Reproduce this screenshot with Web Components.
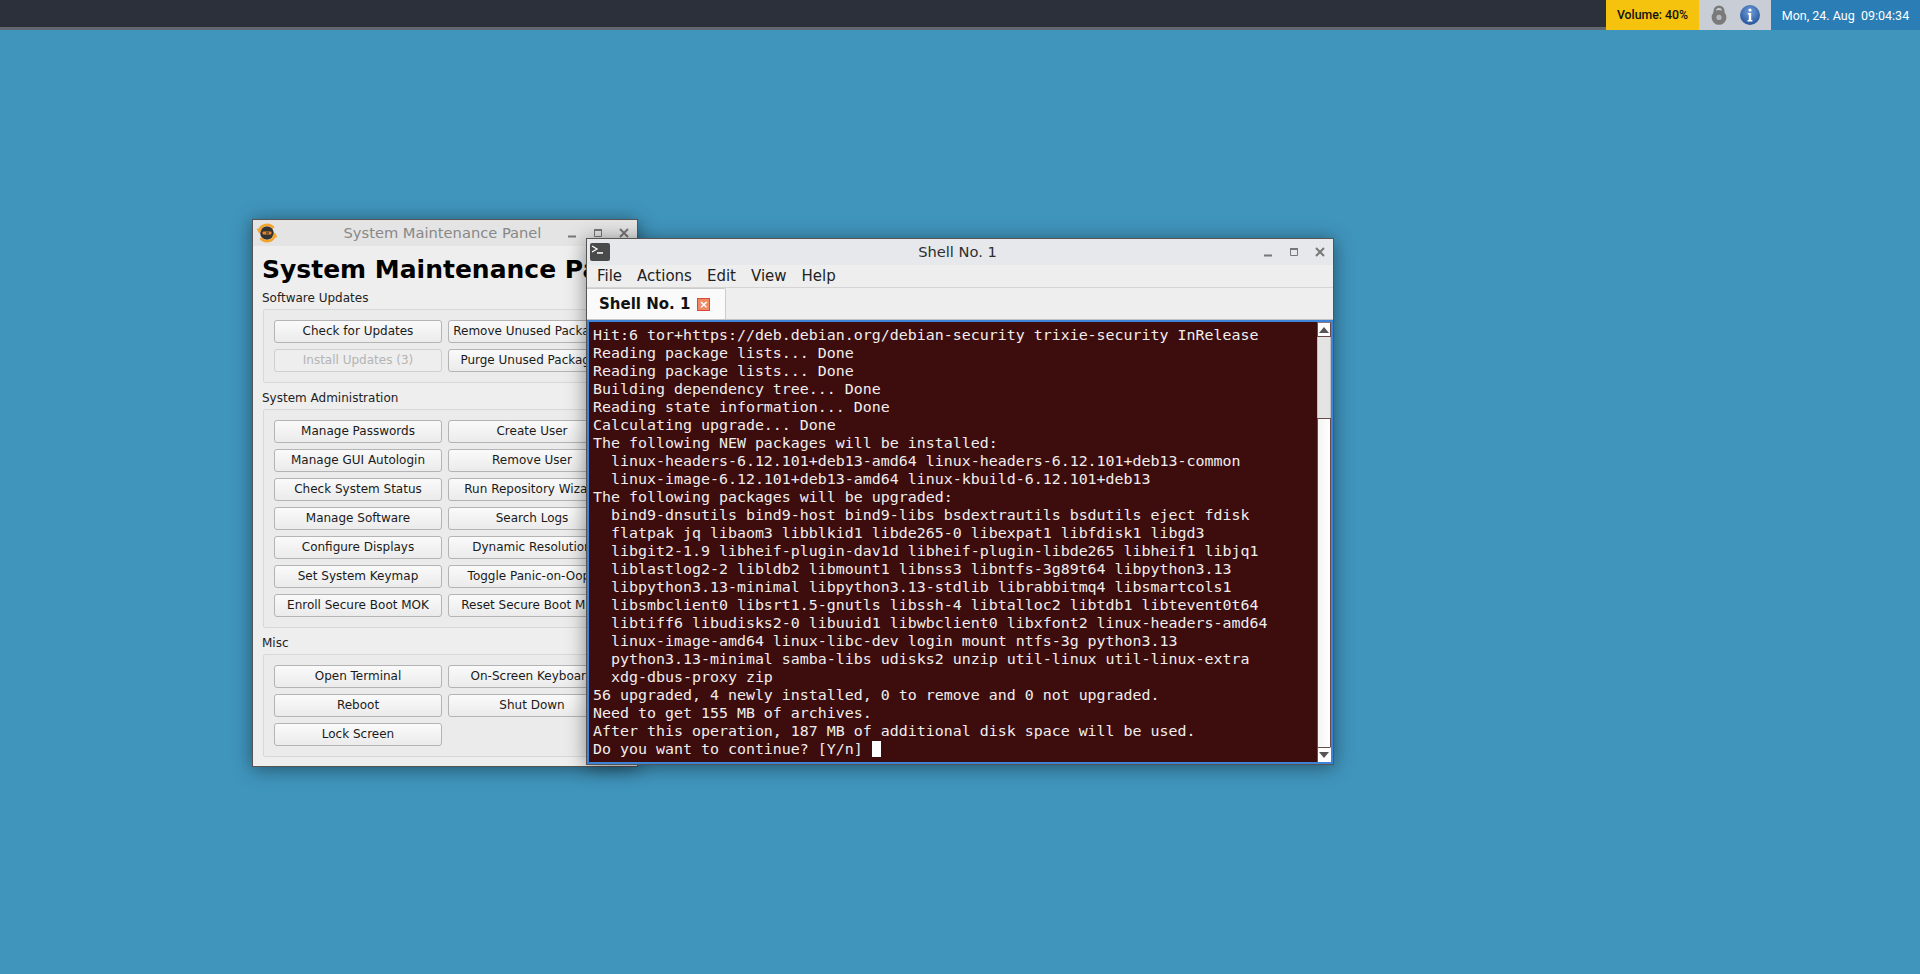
<!DOCTYPE html>
<html>
<head>
<meta charset="utf-8">
<title>Desktop</title>
<style>
  html, body { margin: 0; height: 100%; overflow: hidden; }
  body { background: #4095bd; font-family: "DejaVu Sans", sans-serif; }
  desk-win[data-w="panel"] { left: 252px; top: 219px; width: 386px; height: 548px; }
  desk-win[data-w="shell"] { left: 586px; top: 238px; width: 748px; height: 527px; }
</style>
</head>
<body>
<top-bar></top-bar>

<desk-win data-w="panel" title="System Maintenance Panel" inactive>
  <svg slot="icon" width="22" height="22" viewBox="0 0 22 22">
    <circle cx="11" cy="11" r="6.8" fill="#333"/>
    <path d="M3.2 8.5A8.2 8.2 0 0 1 17.5 6" fill="none" stroke="#f2a42c" stroke-width="2.6"/>
    <path d="M18.8 13.5A8.2 8.2 0 0 1 4.5 16" fill="none" stroke="#f2a42c" stroke-width="2.6"/>
    <path d="M0.5 6.5l5.5 1-3 4z" fill="#f2a42c"/>
    <path d="M21.5 15.5l-5.5-1 3-4z" fill="#f2a42c"/>
    <rect x="6.5" y="9.5" width="9" height="3" rx="1" fill="#e8862a"/>
    <rect x="10" y="10.4" width="3" height="1.2" fill="#333"/>
  </svg>
  <maint-panel></maint-panel>
</desk-win>

<desk-win data-w="shell" title="Shell No. 1">
  <svg slot="icon" width="20" height="18" viewBox="0 0 20 18">
    <rect width="20" height="18" rx="2" fill="#4a4a4a"/>
    <path d="M2 3l5 3-5 3" fill="none" stroke="#fff" stroke-width="1.3"/>
    <rect x="7" y="9.2" width="6" height="1.5" fill="#fff"/>
  </svg>
  <shell-term></shell-term>
</desk-win>

<script>
class TopBar extends HTMLElement {
  constructor() {
    super();
    this.attachShadow({ mode: 'open' });
    this.shadowRoot.innerHTML = `
      <style>
        :host { display: flex; height: 30px; background: #2b303b; font: 12.5px Roboto, sans-serif; box-sizing: border-box; box-shadow: inset 0 -3px 0 #636870; }
        .fill { flex: 1; }
        .vol { width: 93px; background: #f5c20d; color: #111; font-weight: 500; font-size: 12.3px; display: flex; align-items: center; justify-content: center; }
        .tray { width: 72px; box-sizing: border-box; padding-left: 12px; background: #c9ced6; display: flex; align-items: center; gap: 13px; }
        .clock { width: 149px; background: #2a7db5; color: #fff; display: flex; align-items: center; justify-content: center; white-space: pre; }
      </style>
      <div class="fill"></div>
      <div class="vol">Volume: 40%</div>
      <div class="tray">
        <svg width="16" height="20" viewBox="0 0 16 20"><path d="M3.8 9V6a4.2 4.2 0 0 1 8.4 0v3" fill="none" stroke="#7a7a7a" stroke-width="2.6"/><circle cx="8" cy="12.4" r="7.4" fill="#7a7a7a"/><circle cx="8" cy="12.4" r="2.6" fill="#b4b8be"/></svg>
        <svg width="20" height="20" viewBox="0 0 20 20"><defs><radialGradient id="ig" cx="50%" cy="35%" r="70%"><stop offset="0" stop-color="#6f9fd8"/><stop offset="1" stop-color="#1f4f96"/></radialGradient></defs><circle cx="10" cy="10" r="10" fill="url(#ig)"/><circle cx="10" cy="5" r="1.6" fill="#fff"/><path d="M7.8 8h3.4v7h1.2v1.4H7.6V15h1.2V9.4h-1z" fill="#fff"/></svg>
      </div>
      <div class="clock">Mon, 24. Aug  09:04:34</div>`;
  }
}
customElements.define('top-bar', TopBar);

class DeskWin extends HTMLElement {
  constructor() {
    super();
    this.attachShadow({ mode: 'open' });
  }
  connectedCallback() {
    const inactive = this.hasAttribute('inactive');
    this.shadowRoot.innerHTML = `
      <style>
        :host { position: absolute; display: flex; flex-direction: column; box-sizing: border-box; border: 1px solid #555; background: #eeeeee; box-shadow: 0 2px 18px rgba(0,0,0,.45); }
        .bar { height: 26px; flex: none; background: ${inactive ? '#e4e4e4' : '#e6e8ec'}; display: grid; grid-template-columns: 1fr auto 1fr; align-items: center; padding: 0 5px 0 3px; color: ${inactive ? '#888' : '#2e2e2e'}; font: 14.67px "DejaVu Sans", sans-serif; }
        .ico { height: 22px; display: flex; align-items: center; }
        .t { margin: 0 3px 2px 0; }
        .btns { display: flex; gap: 10px; color: #777; justify-content: flex-end; }
        .btns svg { width: 16px; height: 16px; display: block; }
        .body { flex: 1; min-height: 0; display: flex; flex-direction: column; overflow: hidden; }
      </style>
      <div class="bar">
        <div class="ico"><slot name="icon"></slot></div>
        <div class="t">${this.getAttribute('title')}</div>
        <div class="btns">
          <svg viewBox="0 0 16 16"><rect x="4" y="10.5" width="8" height="2" fill="currentColor"/></svg>
          <svg viewBox="0 0 16 16"><path d="M4.5 4.5h7v7h-7z" fill="none" stroke="currentColor"/><rect x="4" y="4" width="8" height="2" fill="currentColor"/></svg>
          <svg viewBox="0 0 16 16"><path d="M4 4l8 8M12 4l-8 8" stroke="currentColor" stroke-width="2"/></svg>
        </div>
      </div>
      <div class="body"><slot></slot></div>`;
    this.removeAttribute('title');
  }
}
customElements.define('desk-win', DeskWin);

class SysButton extends HTMLElement {
  constructor() {
    super();
    this.attachShadow({ mode: 'open' });
    this.shadowRoot.innerHTML = `
      <style>
        :host { display: flex; align-items: center; justify-content: center; box-sizing: border-box; height: 23px; padding-bottom: 1px; border: 1px solid #b4b4b4; border-radius: 3px; background: linear-gradient(#fafafa, #ebebeb); font: 12px "DejaVu Sans", sans-serif; color: #1a1a1a; white-space: nowrap; overflow: hidden; }
        :host([disabled]) { color: #b4b4b4; border-color: #cfcfcf; background: #eeeeee; }
      </style>
      <slot></slot>`;
  }
}
customElements.define('sys-button', SysButton);

class BtnGroup extends HTMLElement {
  constructor() {
    super();
    this.attachShadow({ mode: 'open' });
    this.shadowRoot.innerHTML = `
      <style>
        :host { display: block; font: 12px "DejaVu Sans", sans-serif; color: #222; }
        .lab { height: 16px; line-height: 16px; margin-bottom: 3px; }
        .box { margin-left: 1px; border: 1px solid #d8d8d8; border-radius: 2px; background: #ebebeb; padding: 10px; display: grid; grid-template-columns: 168px 168px; column-gap: 6px; row-gap: 6px; }
      </style>
      <div class="lab"></div>
      <div class="box"><slot></slot></div>`;
  }
  connectedCallback() {
    this.shadowRoot.querySelector('.lab').textContent = this.getAttribute('label');
  }
}
customElements.define('btn-group', BtnGroup);

class MaintPanel extends HTMLElement {
  constructor() {
    super();
    this.attachShadow({ mode: 'open' });
    const sections = [
      ['Software Updates', ['Check for Updates', 'Remove Unused Packages', '!Install Updates (3)', 'Purge Unused Packages']],
      ['System Administration', ['Manage Passwords', 'Create User', 'Manage GUI Autologin', 'Remove User', 'Check System Status', 'Run Repository Wizard', 'Manage Software', 'Search Logs', 'Configure Displays', 'Dynamic Resolution', 'Set System Keymap', 'Toggle Panic-on-Oops', 'Enroll Secure Boot MOK', 'Reset Secure Boot MOK']],
      ['Misc', ['Open Terminal', 'On-Screen Keyboard', 'Reboot', 'Shut Down', 'Lock Screen']],
    ];
    const html = sections.map(([label, items]) => `<btn-group label="${label}">` + items.map(t =>
      t[0] === '!' ? `<sys-button disabled>${t.slice(1)}</sys-button>` : `<sys-button>${t}</sys-button>`).join('') + `</btn-group>`).join('');
    this.shadowRoot.innerHTML = `
      <style>
        :host { display: flex; flex-direction: column; padding: 10px 9px 9px; gap: 7px; width: 384px; box-sizing: border-box; }
        h1 { margin: 0; font: bold 25px/27px "DejaVu Sans", sans-serif; color: #000; white-space: nowrap; }
      </style>
      <h1>System Maintenance Panel</h1>${html}`;
  }
}
customElements.define('maint-panel', MaintPanel);

const TERM_LINES = [
'Hit:6 tor+https://deb.debian.org/debian-security trixie-security InRelease',
'Reading package lists... Done',
'Reading package lists... Done',
'Building dependency tree... Done',
'Reading state information... Done',
'Calculating upgrade... Done',
'The following NEW packages will be installed:',
'  linux-headers-6.12.101+deb13-amd64 linux-headers-6.12.101+deb13-common',
'  linux-image-6.12.101+deb13-amd64 linux-kbuild-6.12.101+deb13',
'The following packages will be upgraded:',
'  bind9-dnsutils bind9-host bind9-libs bsdextrautils bsdutils eject fdisk',
'  flatpak jq libaom3 libblkid1 libde265-0 libexpat1 libfdisk1 libgd3',
'  libgit2-1.9 libheif-plugin-dav1d libheif-plugin-libde265 libheif1 libjq1',
'  liblastlog2-2 libldb2 libmount1 libnss3 libntfs-3g89t64 libpython3.13',
'  libpython3.13-minimal libpython3.13-stdlib librabbitmq4 libsmartcols1',
'  libsmbclient0 libsrt1.5-gnutls libssh-4 libtalloc2 libtdb1 libtevent0t64',
'  libtiff6 libudisks2-0 libuuid1 libwbclient0 libxfont2 linux-headers-amd64',
'  linux-image-amd64 linux-libc-dev login mount ntfs-3g python3.13',
'  python3.13-minimal samba-libs udisks2 unzip util-linux util-linux-extra',
'  xdg-dbus-proxy zip',
'56 upgraded, 4 newly installed, 0 to remove and 0 not upgraded.',
'Need to get 155 MB of archives.',
'After this operation, 187 MB of additional disk space will be used.',
'Do you want to continue? [Y/n] ',
];

class ShellTerm extends HTMLElement {
  constructor() {
    super();
    this.attachShadow({ mode: 'open' });
    this.shadowRoot.innerHTML = `
      <style>
        :host { display: flex; flex-direction: column; flex: 1; min-height: 0; height: 100%; font: 15px "DejaVu Sans", sans-serif; color: #222; }
        .menu { height: 23px; box-sizing: border-box; display: flex; gap: 15px; align-items: center; padding: 0 10px; border-bottom: 1px solid #d4d4d4; flex: none; }
        .tabs { height: 32px; box-sizing: border-box; display: flex; flex: none; border-bottom: 1px solid #c4c4c4; }
        .tab { width: 139px; box-sizing: border-box; background: #fafafa; border: 1px solid #ccc; border-bottom: 0; border-left: 0; border-radius: 0 2px 0 0; display: flex; align-items: center; gap: 7px; padding-left: 12px; font-weight: bold; color: #111; height: 31px; }
        .x { width: 13px; height: 13px; box-sizing: border-box; background: #ef8a64; border: 1px solid #d9463a; color: #fff; font: bold 11px/11px "DejaVu Sans", sans-serif; text-align: center; }
        .term { flex: 1; min-height: 0; display: flex; border: 2px solid #3d84d8; background: #3d0c0c; }
        pre { flex: 1; margin: 0; padding: 4px 0 0 4px; font: 14.95px/18px "DejaVu Sans Mono", monospace; color: #f0eeee; overflow: hidden; }
        .cur { display: inline-block; width: 9px; height: 16px; background: #fff; vertical-align: -3px; }
        .sb { width: 14px; flex: none; display: flex; flex-direction: column; background: #e4e4e4; box-shadow: inset 1px 0 0 #c0c0c0, inset -1px 0 0 #c0c0c0; }
        .arr { height: 15px; box-sizing: border-box; flex: none; background: #fff; display: flex; align-items: center; justify-content: center; border: 1px solid #6b4a4a; }
        .arr.u { border-top-color: #8a7a7a; }
        .arr.d { border-top-width: 1px; border-bottom: 0; border-right-color: #fff; }
        .thumb { flex: 1; background: linear-gradient(90deg, #f4f4f4, #fff); border: 1px solid #6b4a4a; border-bottom: 0; }
        .gap { height: 81px; flex: none; }
      </style>
      <div class="menu"><span>File</span><span>Actions</span><span>Edit</span><span>View</span><span>Help</span></div>
      <div class="tabs"><div class="tab">Shell No. 1<span class="x">×</span></div></div>
      <div class="term">
        <pre></pre>
        <div class="sb">
          <div class="arr u"><svg width="10" height="6"><path d="M5 0l5 6H0z" fill="#555"/></svg></div>
          <div class="gap"></div>
          <div class="thumb"></div>
          <div class="arr d"><svg width="10" height="6"><path d="M0 0h10L5 6z" fill="#555"/></svg></div>
        </div>
      </div>`;
    const pre = this.shadowRoot.querySelector('pre');
    pre.textContent = TERM_LINES.join('\n');
    const cur = document.createElement('span');
    cur.className = 'cur';
    pre.appendChild(cur);
  }
}
customElements.define('shell-term', ShellTerm);
</script>
</body>
</html>
